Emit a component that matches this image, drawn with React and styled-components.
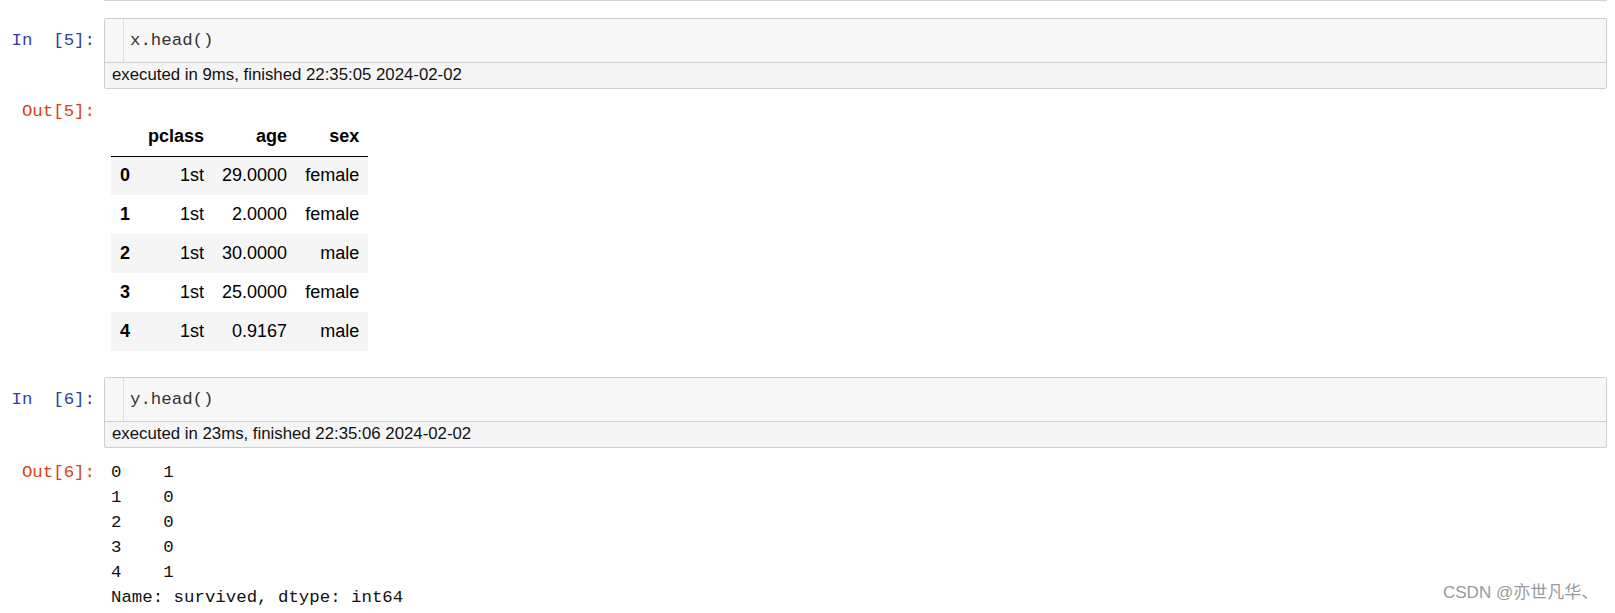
import React from 'react'
import styled, { createGlobalStyle } from 'styled-components';

const GlobalStyle = createGlobalStyle`
  html, body {
    margin: 0;
    padding: 0;
    background: #fff;
  }
  body {
    font-family: "Liberation Sans", Arial, sans-serif;
    overflow: hidden;
  }
`;

const MONO = `"Liberation Mono", "Courier New", monospace`;

const Notebook = styled.div`
  position: relative;
  width: 1615px;
  height: 613px;
  display: flex;
  flex-direction: column;
`;

const Row = styled.div`
  display: flex;
  flex-direction: row;
  align-items: flex-start;
  margin-top: ${p => p.top || 0}px;
  padding-right: 8px;
`;

const Prompt = styled.div`
  width: 104px;
  flex: none;
  box-sizing: border-box;
  padding-right: 9px;
  text-align: right;
  white-space: pre;
  font-family: ${MONO};
  font-size: 17.4px;
  line-height: ${p => p.lh || 24}px;
  padding-top: ${p => p.pt || 0}px;
  color: ${p => p.out ? '#d84315' : '#303f9f'};
`;

const PrevBorder = styled.div`
  flex: 1;
  height: 0;
  border-top: 1px solid #d4d4d4;
`;

const CellBox = styled.div`
  flex: 1;
  display: flex;
  flex-direction: column;
  border: 1px solid #cfcfcf;
  border-radius: 2px;
  background: #f5f5f5;
`;

const CodeArea = styled.div`
  display: flex;
  flex-direction: row;
  height: 43px;
  background: #f7f7f7;
`;

const Gutter = styled.div`
  width: 18px;
  border-right: 1px solid #dddddd;
`;

const CodeLine = styled.div`
  padding-left: 6px;
  font-family: ${MONO};
  font-size: 17.4px;
  line-height: 43px;
  color: #333;
  white-space: pre;
`;

const Timing = styled.div`
  height: 25px;
  border-top: 1px solid #cfcfcf;
  padding-left: 7px;
  font-size: 16.8px;
  line-height: 24px;
  color: #111;
`;

const OutBody = styled.div`
  flex: 1;
  padding-left: ${p => p.pl || 0}px;
  padding-top: ${p => p.pt || 0}px;
`;

const Table = styled.table`
  border-collapse: collapse;
  border-spacing: 0;
  font-family: "Liberation Sans", Arial, sans-serif;
  font-size: 18px;
  color: #000;
`;

const HeadRow = styled.tr`
  height: 39px;
  border-bottom: 1px solid #000;
`;

const BodyRow = styled.tr`
  height: 39px;
  background: ${p => p.odd ? '#fff' : '#f5f5f5'};
`;

const Th = styled.th`
  padding: 0 9px;
  text-align: right;
  font-weight: bold;
  vertical-align: middle;
`;

const Td = styled.td`
  padding: 0 9px;
  text-align: right;
  vertical-align: middle;
`;

const Pre = styled.pre`
  margin: 0;
  font-family: ${MONO};
  font-size: 17.4px;
  line-height: 25px;
  color: #111;
`;

const Watermark = styled.div`
  position: absolute;
  left: 1443px;
  top: 582px;
  font-family: "Liberation Sans", "Noto Sans CJK SC", sans-serif;
  font-size: 17px;
  line-height: 22px;
  color: #9a9a9a;
  white-space: nowrap;
`;

const rows = [
  ['0', '1st', '29.0000', 'female'],
  ['1', '1st', '2.0000', 'female'],
  ['2', '1st', '30.0000', 'male'],
  ['3', '1st', '25.0000', 'female'],
  ['4', '1st', '0.9167', 'male'],
];

const CodeCell = ({ n, code, timing, top }) => (
  <Row top={top}>
    <Prompt lh={43} pt={1}>{`In  [${n}]:`}</Prompt>
    <CellBox>
      <CodeArea>
        <Gutter />
        <CodeLine>{code}</CodeLine>
      </CodeArea>
      <Timing>{timing}</Timing>
    </CellBox>
  </Row>
);

export default function App() {
  return (
    <Notebook>
      <GlobalStyle />
      <Row>
        <Prompt />
        <PrevBorder />
      </Row>
      <CodeCell top={17} n={5} code="x.head()" timing="executed in 9ms, finished 22:35:05 2024-02-02" />

      <Row top={9}>
        <Prompt out lh={28}>Out[5]:</Prompt>
        <OutBody pl={7} pt={19}>
          <Table>
            <thead>
              <HeadRow>
                <Th></Th>
                <Th>pclass</Th>
                <Th>age</Th>
                <Th>sex</Th>
              </HeadRow>
            </thead>
            <tbody>
              {rows.map((r, i) => (
                <BodyRow key={r[0]} odd={i % 2 === 1}>
                  <Th as="th" style={{ textAlign: 'left' }}>{r[0]}</Th>
                  <Td>{r[1]}</Td>
                  <Td>{r[2]}</Td>
                  <Td>{r[3]}</Td>
                </BodyRow>
              ))}
            </tbody>
          </Table>
        </OutBody>
      </Row>

      <CodeCell top={26} n={6} code="y.head()" timing="executed in 23ms, finished 22:35:06 2024-02-02" />

      <Row top={12}>
        <Prompt out lh={25}>Out[6]:</Prompt>
        <OutBody pl={7}>
          <Pre>{`0    1
1    0
2    0
3    0
4    1
Name: survived, dtype: int64`}</Pre>
        </OutBody>
      </Row>

      <Watermark>CSDN @亦世凡华、</Watermark>
    </Notebook>
  );
}
